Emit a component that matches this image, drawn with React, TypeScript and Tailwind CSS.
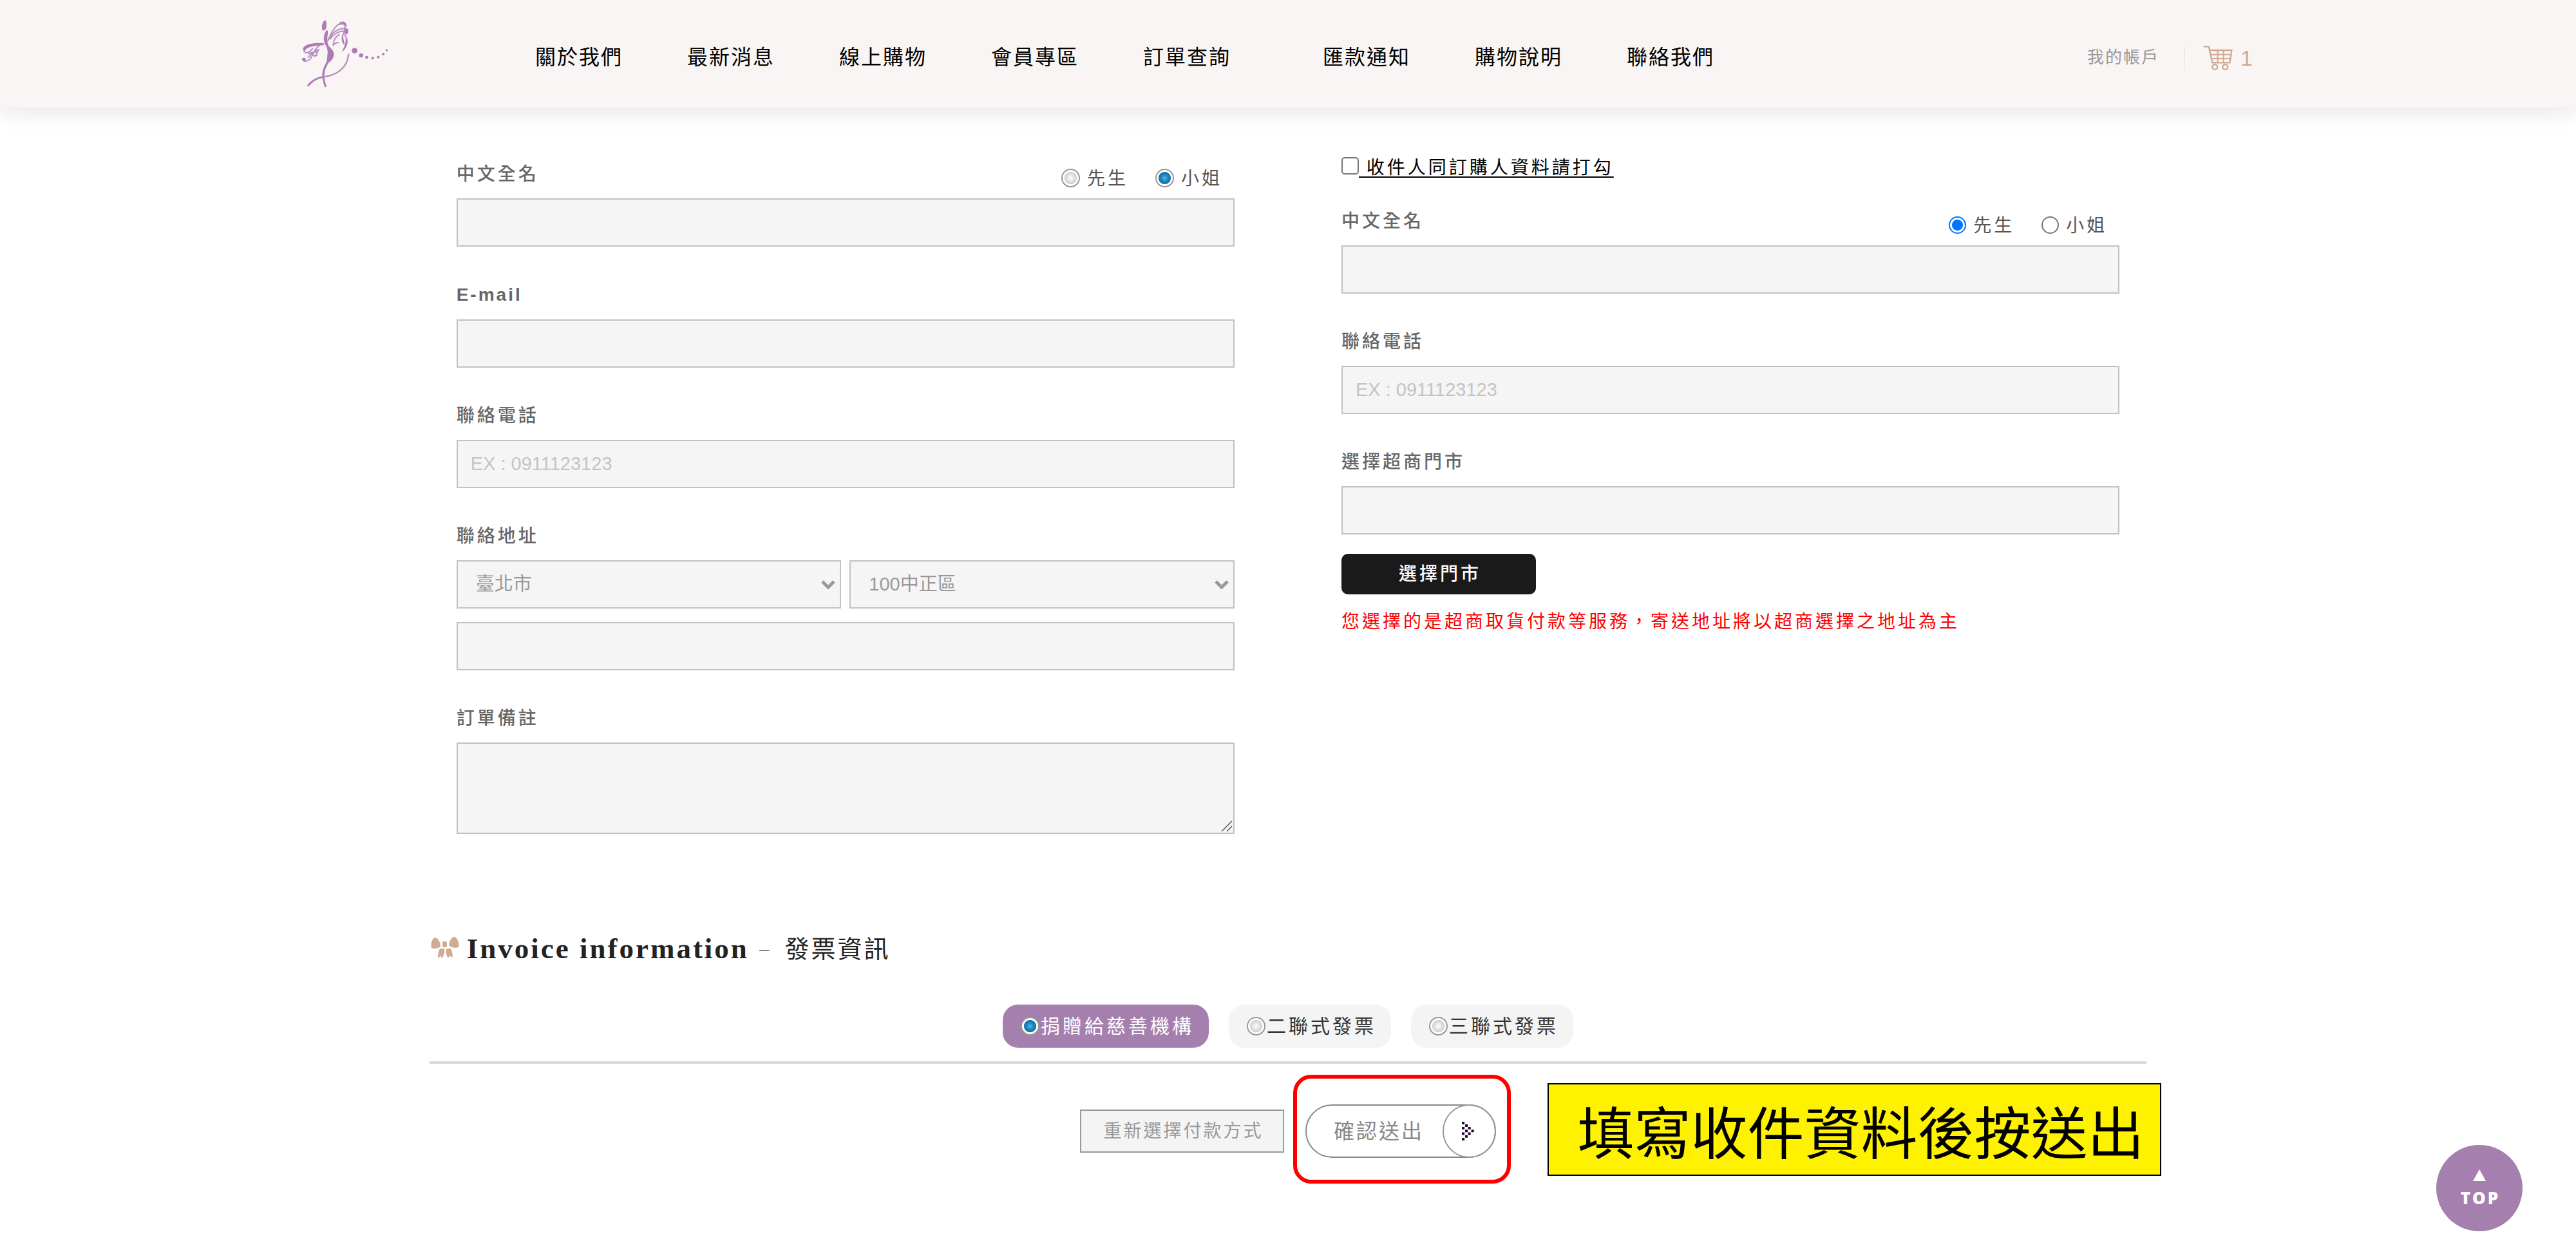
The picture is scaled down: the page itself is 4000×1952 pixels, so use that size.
import { useState } from 'react';
import type { ReactNode } from 'react';

const mainLinks = ['關於我們', '最新消息', '線上購物', '會員專區', '訂單查詢'];
const helpLinks = ['匯款通知', '購物說明', '聯絡我們'];
const invoiceTypes = ['捐贈給慈善機構', '二聯式發票', '三聯式發票'];
const titles = ['先生', '小姐'];

const boxStyle =
  'block w-full h-[75px] border-2 border-[#c2c2c2] bg-[#f5f5f5] px-5 text-[29px] text-[#999] placeholder:text-[#c4c4c4] outline-none';

const skinnedRadio =
  'appearance-none shrink-0 size-[29px] rounded-full border-2 border-[#999] bg-[radial-gradient(circle,#fff_0px,#d0d0d0_9px,#fff_10px)] checked:bg-[radial-gradient(circle,#5db4e2_0px,#1d8ac8_5px,#136ea6_9px,#fff_10px)]';

const plainRadio =
  'appearance-none shrink-0 size-[27px] rounded-full border-2 border-[#767676] bg-white checked:border-[#0075ff] checked:bg-[radial-gradient(circle,#0075ff_8px,#fff_9px)]';

const Logo = () => (
  <svg
    viewBox="84 95 408 324"
    className="w-[136px] h-[108px]"
    fill="none"
    stroke="#b98cc0"
    strokeLinecap="round"
  >
    <g fill="#ad7bb5" stroke="none">
      <path d="M196 99C184 104 179 118 180 136L183 150L198 140C202 126 202 108 196 99Z" />
      <path d="M200 146C187 166 185 192 194 211C203 223 209 240 205 262C204 280 203 290 198 300C187 320 180 338 181 356C183 378 187 395 193 411L201 409C195 390 191 374 191 354C192 334 199 316 210 298C228 286 237 270 235 254C233 236 218 228 211 218C204 207 205 190 205 178C207 165 208 156 207 148Z" />
      <path d="M110 404C128 378 155 364 188 359L188 367C158 371 134 386 118 408Z" />
      <path d="M188 206C150 203 106 206 91 230L94 246L102 242C108 222 150 218 188 216Z" />
      <path d="M258 112C276 100 294 104 295 128L286 130C286 118 276 116 258 122Z" />
      <path d="M289 133C308 142 305 156 294 168L284 157Z" />
      <path d="M276 168C268 186 272 206 286 216L280 186Z" />
      <path d="M290 180C300 196 300 216 284 238L272 246C284 226 292 206 290 180Z" />
    </g>
    <path d="M188 363C246 356 296 326 304 258" strokeWidth="7" />
    <path
      d="M95 238C98 252 108 252 116 249C124 246 130 238 136 232M168 218C152 228 142 244 138 258C130 276 118 290 104 290C96 290 90 286 90 278M116 272C134 254 148 238 166 236M118 256C130 248 144 246 160 248M162 238C158 254 152 264 146 268M140 262L156 264"
      strokeWidth="6"
    />
    <circle cx="96" cy="282" r="8" fill="#ad7bb5" stroke="none" />
    <path
      d="M207 196C222 158 244 118 272 112M212 188C228 156 250 138 288 138M218 186C232 168 256 150 282 150M232 214C234 190 246 174 260 166M232 216C240 206 250 203 258 204M286 132C290 148 276 166 274 180M284 166C296 180 300 196 294 214"
      strokeWidth="6"
    />
    <g fill="#ad7bb5" stroke="none">
      <circle cx="332" cy="241" r="13" />
      <circle cx="362" cy="263" r="10" />
      <circle cx="388" cy="272" r="7" />
      <circle cx="416" cy="276" r="6" />
      <circle cx="442" cy="271" r="6" />
      <circle cx="465" cy="257" r="6" />
      <circle cx="481" cy="239" r="5" />
    </g>
  </svg>
);

const CartIcon = () => (
  <svg
    viewBox="670 90 138 117"
    className="w-[46px] h-[39px]"
    fill="none"
    stroke="#d1a891"
    strokeWidth="7"
  >
    <path d="M672 97H696L713 172H794L803 114H703" />
    <path d="M707 134H800M711 153H797M738 114V172M765 114V172" strokeWidth="6" />
    <circle cx="725" cy="192" r="12" />
    <circle cx="773" cy="192" r="12" />
  </svg>
);

const BowIcon = () => (
  <svg viewBox="0 0 44 36" className="mb-1 w-[44px] h-[36px]" fill="#cfab94">
    <path d="M6 2C11 2 15 9 15 16C12 19 4 20 1 18C-1 12 2 3 6 2Z" />
    <path d="M37 1C41 2 45 12 43 16C40 20 31 17 28 14C28 8 33 0 37 1Z" />
    <rect x="18" y="8" width="7" height="9" rx="2" />
    <path d="M14 19H21C22 24 20 31 17 34L15 30L12 34C10 30 12 24 14 19Z" />
    <path d="M24 19H31C33 24 35 30 33 33L29 30L27 34C24 30 23 25 24 19Z" />
  </svg>
);

const DottedArrow = () => (
  <svg viewBox="0 0 60 88" className="w-5 h-[29px]" fill="#25002e">
    <path d="M0 0h12v12h-12zM0 24h12v12h-12zM0 50h12v12h-12zM0 76h12v12h-12z" />
    <path d="M15 12h12v12h-12zM15 37h12v12h-12zM15 63h12v12h-12z" />
    <path d="M29 24h12v12h-12zM29 50h12v12h-12zM44 37h12v12h-12z" />
  </svg>
);

const NavList = ({ links }: { links: string[] }) => (
  <ul className="flex gap-[100px]">
    {links.map((link) => (
      <li key={link}>
        <a href="#" className="text-[32px] tracking-[2px] text-black">
          {link}
        </a>
      </li>
    ))}
  </ul>
);

type FieldProps = {
  id: string;
  label: string;
  extra?: ReactNode;
  children: ReactNode;
};

const Field = ({ id, label, extra, children }: FieldProps) => (
  <div>
    <div className="mb-4 flex h-[42px] items-end justify-between">
      <label
        htmlFor={id}
        className="text-[28px] leading-[42px] font-medium tracking-[4px] text-[#666]"
      >
        {label}
      </label>
      {extra}
    </div>
    {children}
  </div>
);

type TitleRadiosProps = {
  name: string;
  initial: string;
  radioClass: string;
};

const TitleRadios = ({ name, initial, radioClass }: TitleRadiosProps) => {
  const [value, setValue] = useState(initial);
  return (
    <div className="flex gap-[42px] pr-[19px]">
      {titles.map((title) => (
        <label
          key={title}
          className="flex items-center gap-[11px] text-[28px] leading-7 tracking-[4px] text-[#555]"
        >
          <input
            type="radio"
            name={name}
            checked={value === title}
            onChange={() => setValue(title)}
            className={`${radioClass} -mt-1`}
          />
          {title}
        </label>
      ))}
    </div>
  );
};

const AreaSelect = ({ label, option }: { label: string; option: string }) => (
  <div className="relative flex-1">
    <select
      aria-label={label}
      className="block w-full h-[75px] appearance-none border-2 border-[#c2c2c2] bg-[#f5f5f5] pl-7 text-[29px] text-[#999]"
    >
      <option>{option}</option>
    </select>
    <svg
      viewBox="0 0 22 14"
      className="pointer-events-none absolute right-[9px] top-[31px] w-[22px] h-[14px]"
      fill="none"
      stroke="#999"
      strokeWidth="5"
    >
      <path d="M2 2L11 11L20 2" />
    </svg>
  </div>
);

export default function App() {
  const [invoice, setInvoice] = useState(invoiceTypes[0]);

  return (
    <div className="min-h-screen bg-white font-['Liberation_Sans','Noto_Sans_CJK_TC',sans-serif]">
      <header className="bg-[#f9f5f4] shadow-[0_0_40px_rgba(0,0,0,0.14)]">
        <div className="mx-auto flex h-[167px] w-[77%] items-center pl-2 pr-[42px]">
          <a href="#" aria-label="首頁">
            <Logo />
          </a>
          <nav className="ml-[227px] flex gap-[143px] pt-[10px]">
            <NavList links={mainLinks} />
            <NavList links={helpLinks} />
          </nav>
          <div className="ml-auto flex items-center pt-[12px]">
            <a href="#" className="text-[26px] tracking-[2px] text-[#999]">
              我的帳戶
            </a>
            <span className="ml-[38px] h-[34px] border-l-2 border-dotted border-[#e3dfde]" />
            <a
              href="#"
              className="ml-7 flex items-center gap-3 text-[34px] leading-[42px] text-[#d1a891]"
            >
              <CartIcon />1
            </a>
          </div>
        </div>
      </header>

      <main className="mx-auto w-2/3 pt-[73px] pb-[154px]">
        <div className="grid grid-cols-2 gap-[166px] px-[42px]">
          <section className="flex flex-col gap-[54px] pt-[10px]">
            <Field
              id="buyer-name"
              label="中文全名"
              extra={
                <TitleRadios
                  name="buyer-title"
                  initial="小姐"
                  radioClass={skinnedRadio}
                />
              }
            >
              <input id="buyer-name" type="text" className={boxStyle} />
            </Field>
            <div>
              <label
                htmlFor="buyer-email"
                className="mb-[17px] block text-[28px] leading-[42px] font-bold tracking-[3px] text-[#666]"
              >
                E-mail
              </label>
              <input id="buyer-email" type="email" className={boxStyle} />
            </div>
            <Field id="buyer-phone" label="聯絡電話">
              <input
                id="buyer-phone"
                type="tel"
                placeholder="EX : 0911123123"
                className={boxStyle}
              />
            </Field>
            <Field id="buyer-address" label="聯絡地址">
              <div className="mb-[21px] flex gap-[13px]">
                <AreaSelect label="縣市" option="臺北市" />
                <AreaSelect label="鄉鎮市區" option="100中正區" />
              </div>
              <input id="buyer-address" type="text" className={boxStyle} />
            </Field>
            <Field id="order-note" label="訂單備註">
              <div className="relative">
                <textarea
                  id="order-note"
                  className="block w-full h-[142px] border-2 border-[#c2c2c2] bg-[#f5f5f5] px-5 py-4 text-[29px] text-[#999] outline-none"
                />
                <svg
                  viewBox="0 0 18 18"
                  className="pointer-events-none absolute right-[3px] bottom-[3px] size-[18px] bg-[#f5f5f5]"
                  stroke="#555"
                  strokeWidth="1.500"
                >
                  <path d="M1 17L17 1M9 17L17 9" />
                </svg>
              </div>
            </Field>
          </section>

          <section>
            <label className="mb-[41px] flex h-[42px] items-center text-[28px] tracking-[4px] text-black">
              <input
                type="checkbox"
                className="-mt-2 size-[27px] shrink-0 appearance-none rounded-[5px] border-2 border-[#767676] bg-white checked:border-[#0075ff] checked:bg-[#0075ff]"
              />
              <span className="underline decoration-2 underline-offset-4">
                &nbsp;收件人同訂購人資料請打勾
              </span>
            </label>
            <div className="flex flex-col gap-[54px]">
              <Field
                id="receiver-name"
                label="中文全名"
                extra={
                  <TitleRadios
                    name="receiver-title"
                    initial="先生"
                    radioClass={plainRadio}
                  />
                }
              >
                <input id="receiver-name" type="text" className={boxStyle} />
              </Field>
              <Field id="receiver-phone" label="聯絡電話">
                <input
                  id="receiver-phone"
                  type="tel"
                  placeholder="EX : 0911123123"
                  className={boxStyle}
                />
              </Field>
              <Field id="store" label="選擇超商門市">
                <input id="store" type="text" className={boxStyle} />
              </Field>
            </div>
            <button
              type="button"
              className="mt-[30px] block h-[63px] w-[302px] rounded-[10px] bg-[#1a1a1a] pl-1 text-[28px] font-medium tracking-[4px] text-white"
            >
              選擇門市
            </button>
            <p className="mt-[22px] text-[28px] leading-[42px] tracking-[4px] text-[#f00]">
              您選擇的是超商取貨付款等服務，寄送地址將以超商選擇之地址為主
            </p>
          </section>
        </div>

        <h2 className="mt-[149px] flex h-[60px] items-center pl-[2px] text-[#222]">
          <BowIcon />
          <span className="ml-3 font-['Liberation_Serif',serif] text-[45px] font-bold tracking-[3px]">
            Invoice information
          </span>
          <span className="ml-4 text-[28px] text-[#777]">–</span>
          <span className="ml-6 text-[38px] tracking-[3px]">發票資訊</span>
        </h2>

        <div className="mt-14 flex justify-center gap-[31px] border-b-4 border-[#dadada] pb-[21px]">
          {invoiceTypes.map((type) => (
            <label
              key={type}
              className={`flex h-[67px] items-center gap-[2px] rounded-[24px] pl-7 pr-[23px] text-[30px] tracking-[4px] ${
                invoice === type
                  ? 'bg-[#a57fae] text-white'
                  : 'bg-[#f4f4f4] text-[#333]'
              }`}
            >
              <input
                type="radio"
                name="invoice"
                checked={invoice === type}
                onChange={() => setInvoice(type)}
                className={skinnedRadio}
              />
              {type}
            </label>
          ))}
        </div>

        <div className="flex items-center justify-center gap-[33px] pt-[63px]">
          <button
            type="button"
            className="h-[67px] w-[317px] border-2 border-[#999] bg-[#f4f4f4] pl-1 text-[28px] tracking-[3px] text-[#999]"
          >
            重新選擇付款方式
          </button>
          <div className="relative">
            <button
              type="submit"
              className="flex h-[83px] w-[296px] items-center rounded-full border-2 border-[#888] pl-[42px] text-[32px] tracking-[3px] text-[#888]"
            >
              確認送出
              <span className="-mr-[2px] ml-auto flex size-[83px] items-center justify-center rounded-full border-2 border-[#999] pr-1">
                <DottedArrow />
              </span>
            </button>
            {/* tutorial marks over the submit button */}
            <div className="pointer-events-none absolute -top-[46px] -bottom-[40px] -left-[19px] -right-[23px] rounded-[28px] border-6 border-[#f00]" />
            <div className="absolute -top-[33px] left-full ml-20 flex h-[144px] w-[953px] items-center justify-center border-2 border-black bg-[#fff200] pl-5 pt-4 text-[88px] leading-[88px] whitespace-nowrap text-black">
              填寫收件資料後按送出
            </div>
          </div>
        </div>
      </main>

      <a
        href="#"
        className="fixed right-[83px] bottom-10 flex size-[134px] flex-col items-center justify-center gap-3 rounded-full bg-[#a57fae] font-['Open_Sans',sans-serif] text-[26px] leading-7 font-extrabold tracking-[3px] text-white"
      >
        <svg viewBox="0 0 20 18" className="w-5 h-[18px]" fill="currentColor">
          <path d="M10 0L20 18H0Z" />
        </svg>
        <span className="pl-[3px]">TOP</span>
      </a>
    </div>
  );
}
